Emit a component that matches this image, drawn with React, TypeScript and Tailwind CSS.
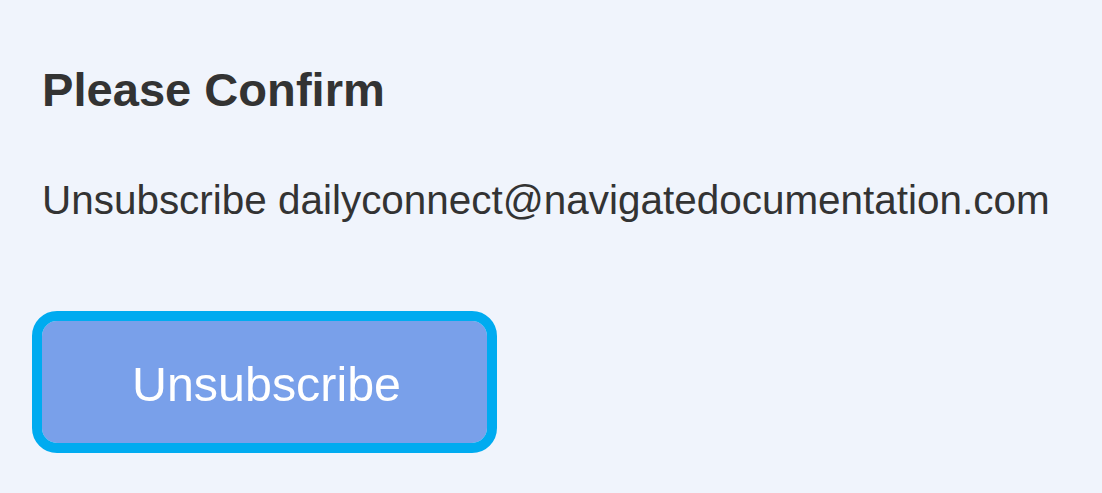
export default function App() {
  return (
    <div
      className="min-h-[493px] w-full bg-[#f0f4fc] pl-[42px] pt-[64px] text-[#333333]"
      style={{ fontFamily: '"Liberation Sans", Arial, sans-serif' }}
    >
      <h3 className="m-0 text-[47.1px] font-bold leading-[52px]">Please Confirm</h3>
      <p className="mt-[62px] text-[40.45px] leading-[45px]">
        Unsubscribe dailyconnect@navigatedocumentation.com
      </p>
      <button
        type="button"
        className="mt-[98px] flex h-[122px] w-[445px] items-center justify-center rounded-[15px] bg-[#79a0ea] pl-[4px] pt-[3px] text-[48.4px] leading-[54px] text-white outline-solid outline-[length:10px] outline-[#00abf0]"
      >
        Unsubscribe
      </button>
    </div>
  );
}
